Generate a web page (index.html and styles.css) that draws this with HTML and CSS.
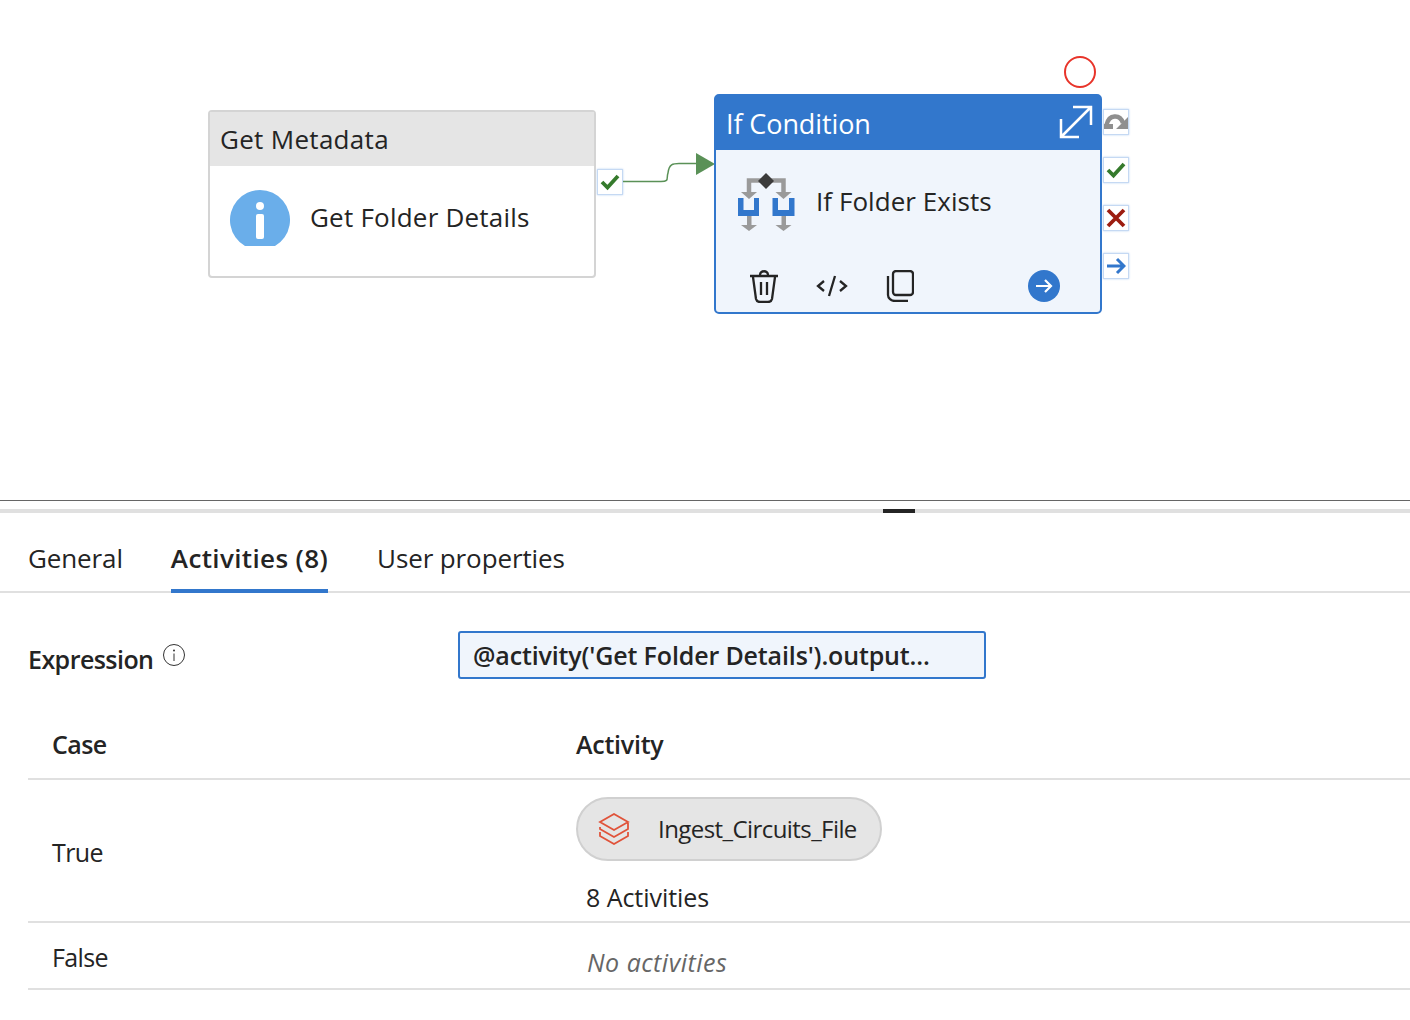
FILE: index.html
```html
<!DOCTYPE html>
<html lang="en">
<head>
    <meta charset="UTF-8">
    <title>If Condition</title>
    <link rel="stylesheet" href="styles.css">
</head>
<body>
    <!-- Pipeline canvas -->
    <div class="canvas">
        <div class="node node-meta">
            <div class="node-head">Get Metadata</div>
            <div class="node-body">
                <svg class="info-icon" width="60" height="56" viewBox="0 0 60 56">
                    <path d="M15 56A30 30 0 1 1 45 56z" fill="#6aaeea"/>
                    <circle cx="30" cy="16" r="4" fill="#fff"/>
                    <rect x="26" y="24" width="8" height="25" rx="2" fill="#fff"/>
                </svg>
                <span class="node-name">Get Folder Details</span>
            </div>
        </div>

        <div class="port port-out">
            <svg width="20" height="20" viewBox="0 0 20 20"><path d="M2 10l5.500 5.500L18 4" class="mark mark-green"/></svg>
        </div>

        <svg class="link" width="92" height="32" viewBox="0 0 92 32">
            <path d="M0 28.500H38C47 28.500 43 25 45 20C46 11 50 10.500 56 10.500H73" fill="none" stroke="#5a9157" stroke-width="1.500"/>
            <path d="M73 0V22L92 11z" fill="#5a9157"/>
        </svg>

        <div class="node node-if">
            <div class="if-head">
                <span>If Condition</span>
                <svg class="expand" width="34" height="34" viewBox="0 0 34 34">
                    <path d="M2 32L32 2M14 2H32V20M2 14V32H20" fill="none" stroke="#fff" stroke-width="2.500"/>
                </svg>
            </div>
            <div class="if-body">
                <div class="if-row">
                    <svg width="60" height="62" viewBox="0 0 60 62">
                        <path d="M13 24V10.500H47.500V24" fill="none" stroke="#9a9a9a" stroke-width="4.500"/>
                        <path d="M5 22H21L13 29zM39.500 22H55.500L47.500 29z" fill="#9a9a9a"/>
                        <path d="M30 3L38 11 30 19 22 11z" fill="#3b3b3b"/>
                        <path d="M2 28H7.500V40H18V28H23V46H2zM36.500 28H42V40H53V28H58.500V46H36.500z" fill="#3277cc"/>
                        <path d="M11 46H15.500V56H11zM45.500 46H50V56H45.500z" fill="#9a9a9a"/>
                        <path d="M5 55H21L13 61zM39.500 55H55.500L47.500 61z" fill="#9a9a9a"/>
                    </svg>
                    <span class="node-name">If Folder Exists</span>
                </div>
                <div class="if-tools">
                    <svg width="30" height="34" viewBox="0 0 30 34" class="tool">
                        <path d="M1 7H29M11 6C11 1 19 1 19 6M4 8L7 30C7.500 32 9 33 11 33H19C21 33 22.500 32 23 30L26 8M12 13V26M18 13V26" fill="none" stroke="#242424" stroke-width="2.300"/>
                    </svg>
                    <svg width="32" height="26" viewBox="0 0 32 26" class="tool">
                        <path d="M8 8L2 13 8 18M24 8L30 13 24 18M19 3L13 23" fill="none" stroke="#242424" stroke-width="2.300"/>
                    </svg>
                    <svg width="28" height="32" viewBox="0 0 28 32" class="tool">
                        <rect x="7" y="1" width="20" height="24" rx="3" fill="none" stroke="#242424" stroke-width="2.300"/>
                        <path d="M2 6V25C2 28 5 31 9 31H22" fill="none" stroke="#242424" stroke-width="2.300"/>
                    </svg>
                    <svg width="32" height="32" viewBox="0 0 32 32" class="go">
                        <circle cx="16" cy="16" r="16" fill="#3277cc"/>
                        <path d="M8 16H23M17 10L23 16 17 22" fill="none" stroke="#fff" stroke-width="2.200"/>
                    </svg>
                </div>
            </div>
        </div>

        <div class="red-ring"></div>

        <div class="side-ports">
            <div class="port">
                <svg width="24" height="24" viewBox="0 0 24 24">
                    <path d="M2.500 15C5 4 16 4 19 13" fill="none" stroke="#8f8f8f" stroke-width="4.500"/>
                    <path d="M0 14H9V19H0zM24 7V19H12z" fill="#8f8f8f"/>
                </svg>
            </div>
            <div class="port">
                <svg width="20" height="20" viewBox="0 0 20 20"><path d="M2 10l5.500 5.500L18 4" class="mark mark-green"/></svg>
            </div>
            <div class="port">
                <svg width="20" height="20" viewBox="0 0 20 20"><path d="M2 2L18 18M18 2L2 18" class="mark mark-red"/></svg>
            </div>
            <div class="port">
                <svg width="20" height="20" viewBox="0 0 20 20"><path d="M1 10H18M11 3L18 10 11 17" fill="none" stroke="#3277cc" stroke-width="3"/></svg>
            </div>
        </div>
    </div>

    <div class="splitter"><span class="grip"></span></div>

    <!-- Properties panel -->
    <div class="tabs">
        <span class="tab">General</span>
        <span class="tab active">Activities (8)</span>
        <span class="tab">User properties</span>
    </div>

    <div class="expression">
        <label class="expr-label">Expression
            <svg width="24" height="24" viewBox="0 0 24 24" class="expr-info">
                <circle cx="12" cy="12" r="10.500" fill="none" stroke="#333" stroke-width="1"/>
                <path d="M12 10.500V18" stroke="#333" stroke-width="1"/>
                <circle cx="12" cy="7.500" r="1" fill="#333"/>
            </svg>
        </label>
        <div class="expr-box">@activity('Get Folder Details').output...</div>
    </div>

    <div class="case-table">
        <div class="case-row case-head">
            <div>Case</div>
            <div class="activity-title">Activity</div>
        </div>
        <div class="case-row case-true">
            <div>True</div>
            <div class="activity-cell">
                <div class="pill">
                    <svg width="32" height="32" viewBox="0 0 32 32">
                        <path d="M2 10L16 2 30 10 16 18z M2 15V17L16 25 30 17V11 M2 20V24L16 32 30 24V20" transform="translate(0 -1)" fill="none" stroke="#e0533a" stroke-width="1.800"/>
                    </svg>
                    <span>Ingest_Circuits_File</span>
                </div>
                <div class="count">8 Activities</div>
            </div>
        </div>
        <div class="case-row case-false">
            <div>False</div>
            <div class="none">No activities</div>
        </div>
    </div>
</body>
</html>
```

FILE: styles.css
```css
/* Page */
body {
    margin: 0;
    background: #fff;
    color: #242424;
    font-family: "Open Sans", "Noto Sans", sans-serif;
    overflow: hidden;
}

/* Canvas */
.canvas {
    position: relative;
    height: 500px;
    border-bottom: 1px solid #666;
}

.node {
    position: absolute;
    box-sizing: border-box;
}

.node-meta {
    left: 208px;
    top: 110px;
    width: 388px;
    height: 168px;
    border: 2px solid #d4d4d4;
    border-radius: 4px;
    background: #fff;
}

.node-head {
    height: 54px;
    padding-left: 10px;
    background: #e5e5e5;
    font-size: 26px;
    letter-spacing: 0.300px;
    line-height: 55px;
}

.node-body {
    display: flex;
    align-items: flex-start;
    gap: 20px;
    padding: 24px 0 0 20px;
}

.info-icon {
    flex: none;
}

.node-name {
    font-size: 26px;
    letter-spacing: 0.220px;
    line-height: 54px;
}

.port {
    box-sizing: border-box;
    display: flex;
    align-items: center;
    justify-content: center;
    width: 26px;
    height: 26px;
    background: #fff;
    border: 1px solid #c5d9f3;
    box-shadow: 0 0 2px #b9d2f2;
}

.port-out {
    position: absolute;
    left: 597px;
    top: 169px;
}

.mark {
    fill: none;
    stroke-width: 3.800;
}

.mark-green {
    stroke: #357a2c;
}

.mark-red {
    stroke: #9c1c10;
}

.link {
    position: absolute;
    left: 623px;
    top: 153px;
}

.node-if {
    left: 714px;
    top: 94px;
    width: 388px;
    height: 220px;
    border: 2px solid #3277cc;
    border-radius: 5px;
    background: #f0f5fc;
}

.if-head {
    display: flex;
    align-items: center;
    justify-content: space-between;
    height: 54px;
    padding: 0 7px 0 10px;
    background: #3277cc;
    color: #fff;
    font-size: 27px;
    letter-spacing: -0.100px;
}

.expand {
    margin-top: -2px;
}

.if-row {
    display: flex;
    align-items: flex-start;
    gap: 20px;
    height: 98px;
    padding: 20px 0 0 20px;
}

.if-row .node-name {
    margin-top: 4px;
    letter-spacing: 0.050px;
}

.if-tools {
    display: flex;
    align-items: center;
    height: 36px;
    padding-left: 33px;
}

.tool {
    flex: none;
}

.tool:nth-child(1) {
    margin-right: 37px;
}

.tool:nth-child(2) {
    margin-right: 38px;
}

.go {
    margin-left: 114px;
}

.red-ring {
    position: absolute;
    left: 1064px;
    top: 56px;
    width: 32px;
    height: 32px;
    box-sizing: border-box;
    border: 2px solid #e8342a;
    border-radius: 50%;
}

.side-ports {
    position: absolute;
    left: 1103px;
    top: 109px;
    display: flex;
    flex-direction: column;
    gap: 22px;
}

/* Splitter */
.splitter {
    position: relative;
    height: 4px;
    margin-top: 8px;
    background: #e0e0e0;
}

.grip {
    position: absolute;
    left: 883px;
    top: 0;
    width: 32px;
    height: 4px;
    background: #242424;
}

/* Tabs */
.tabs {
    display: flex;
    gap: 49px;
    height: 78px;
    padding-left: 28px;
    border-bottom: 2px solid #e0e0e0;
    font-size: 26px;
    letter-spacing: -0.120px;
}

.tab {
    box-sizing: border-box;
    height: 80px;
    padding-top: 27px;
    line-height: 36px;
}

.tab.active {
    margin-left: -1px;
    border-bottom: 4px solid #3277cc;
    font-weight: 600;
    letter-spacing: 0.370px;
}

/* Expression */
.expression {
    display: flex;
    align-items: flex-start;
    padding: 38px 0 0 28px;
    height: 48px;
}

.expr-label {
    display: flex;
    align-items: flex-start;
    gap: 9px;
    width: 430px;
    padding-top: 8px;
    font-size: 25px;
    font-weight: 600;
    letter-spacing: -0.550px;
    line-height: 40px;
}

.expr-info {
    margin-top: 4px;
}

.expr-box {
    box-sizing: border-box;
    width: 528px;
    height: 48px;
    padding-left: 13px;
    background: #f0f5fc;
    border: 2px solid #3277cc;
    border-radius: 3px;
    font-size: 25px;
    font-weight: 600;
    letter-spacing: -0.140px;
    line-height: 44px;
}

/* Case table */
.case-table {
    margin: 38px 0 0 28px;
}

.case-row {
    display: grid;
    grid-template-columns: 524px 1fr;
    padding-left: 24px;
    border-bottom: 2px solid #e0e0e0;
    font-size: 25px;
    letter-spacing: -0.600px;
}

.case-head {
    height: 61px;
    font-weight: 600;
    line-height: 54px;
}

.activity-title {
    letter-spacing: -0.250px;
}

.case-true {
    height: 141px;
    line-height: 144px;
}

.activity-cell {
    padding-top: 17px;
    line-height: normal;
}

.pill {
    box-sizing: border-box;
    display: flex;
    align-items: center;
    gap: 28px;
    width: 306px;
    height: 64px;
    padding-left: 20px;
    background: #e5e5e5;
    border: 2px solid #d0d0d0;
    border-radius: 32px;
    font-size: 24px;
}

.pill span {
    margin-top: -2px;
    letter-spacing: -0.570px;
}

.count {
    margin: 19px 0 0 10px;
    letter-spacing: -0.050px;
}

.case-false {
    height: 65px;
    line-height: 68px;
}

.none {
    padding-left: 11px;
    padding-top: 5px;
    color: #666;
    font-style: italic;
    letter-spacing: 0.500px;
}
```
